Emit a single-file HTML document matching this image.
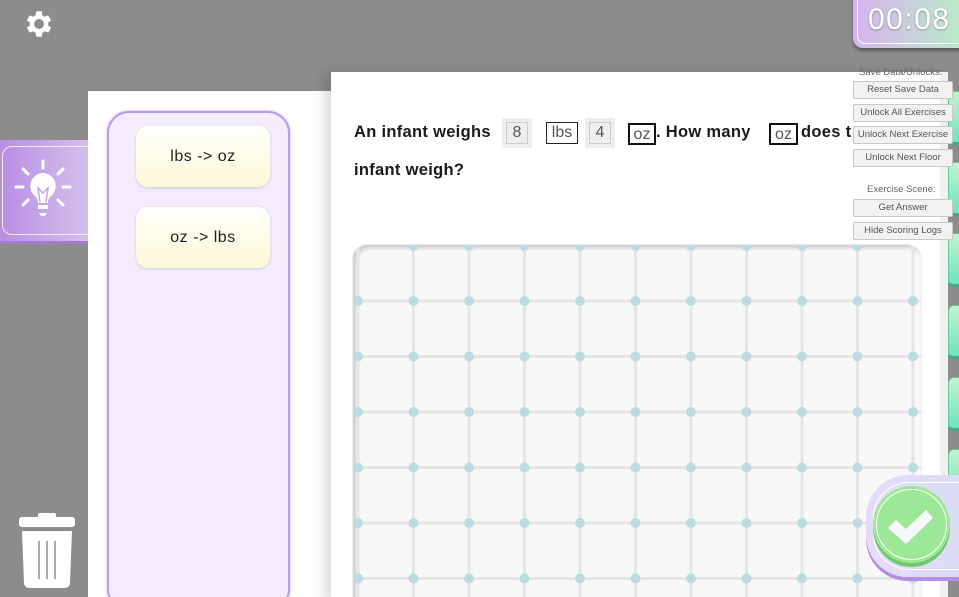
<!DOCTYPE html>
<html style="width:959px;height:597px;overflow:hidden"><head><meta charset="utf-8"><style>
*{margin:0;padding:0;box-sizing:border-box}
body{width:959px;height:597px;overflow:hidden;background:#8c8c8c;font-family:"Liberation Sans",sans-serif;position:relative}
.abs{position:absolute}
.left{left:88px;top:91px;width:245px;height:520px;background:#fff}
.lp{left:107px;top:111px;width:183px;height:500px;background:#f3ecfd;border:2px solid #b79be6;border-radius:22px;box-shadow:0 0 3px #c8b3ee}
.card{left:136px;width:134px;height:61px;border-radius:12px;background:linear-gradient(#fffffb,#fdf8d8);box-shadow:0 1px 3px rgba(0,0,0,.15);font-size:16px;color:#222;text-align:center;line-height:61px;letter-spacing:.5px}
.main{left:331px;top:72px;width:610px;height:530px;background:#fff;box-shadow:-8px 0 10px rgba(0,0,0,.12)}
.q{left:354px;font-size:16.5px;font-weight:bold;color:#1a1a1a;letter-spacing:.3px}
.bx{position:absolute;height:22px;font-size:16px;font-weight:normal;color:#555;text-align:center;line-height:20px}
.g{background:#eee;border:1px solid #ccc;outline:4px solid #eee}
.k{border:2px solid #111}
.btn{left:853px;width:100px;height:18px;background:#f2f2f2;border:1px solid #c8c8c8;border-radius:2px;font-size:9.5px;color:#555;text-align:center;line-height:16px}
.lbl{font-size:9.5px;color:#666}
.tab{left:948px;width:14px;height:54px;border-radius:6px 0 0 6px;background:linear-gradient(#c5f3d1,#70e3bd);border:1px solid #5ccca0;border-bottom:3px solid #3fae86}
</style></head><body>
<svg class="abs" style="left:22px;top:7px" width="34" height="34" viewBox="0 0 24 24"><path fill="#fff" d="M19.4 13a7.5 7.5 0 0 0 0-2l2.1-1.6-2-3.5-2.5 1a7 7 0 0 0-1.7-1L15 3h-4l-.4 2.9a7 7 0 0 0-1.7 1l-2.5-1-2 3.5L6.6 11a7.5 7.5 0 0 0 0 2l-2.2 1.6 2 3.5 2.5-1a7 7 0 0 0 1.7 1L11 21h4l.4-2.9a7 7 0 0 0 1.7-1l2.5 1 2-3.5zM13 15.5A3.5 3.5 0 1 1 13 8.5a3.5 3.5 0 0 1 0 7z" transform="translate(-1 0)"/></svg>
<div class="abs" style="left:-10px;top:140px;width:110px;height:101px;border-radius:12px;background:linear-gradient(90deg,#b389e4,#d8c6ec);box-shadow:0 3px 0 #a57ad6"><div style="position:absolute;left:12px;top:6px;right:-4px;bottom:6px;border:1px solid #eee;border-radius:10px"></div></div>
<svg class="abs" style="left:13px;top:158px" width="60" height="60" viewBox="0 0 60 60"><g stroke="#fff" stroke-width="3" stroke-linecap="round"><line x1="30" y1="3" x2="30" y2="10"/><line x1="10" y1="11" x2="15" y2="16"/><line x1="50" y1="11" x2="45" y2="16"/><line x1="3" y1="29" x2="10" y2="29"/><line x1="50" y1="29" x2="57" y2="29"/><line x1="10" y1="47" x2="15" y2="42"/><line x1="50" y1="47" x2="45" y2="42"/></g><path fill="#fff" d="M30 15a13 13 0 0 0-8 23c2 2 3 4 3 7h10c0-3 1-5 3-7a13 13 0 0 0-8-23z"/><rect x="25" y="47" width="10" height="4" fill="#fff"/><path d="M26 55h8l-2 3h-4z" fill="#fff"/><path d="M27 44l-2-14 5 5 5-5-2 14" stroke="#c4a6e6" stroke-width="1.5" fill="none"/></svg>
<svg class="abs" style="left:18px;top:513px" width="58" height="76" viewBox="0 0 58 76"><rect x="1" y="4" width="56" height="10" rx="3" fill="#fff"/><rect x="20" y="0" width="18" height="6" rx="2" fill="#fff"/><path d="M4 18h50l-2 52a5 5 0 0 1-5 5H11a5 5 0 0 1-5-5z" fill="#fff"/><g stroke="#aaa" stroke-width="2"><line x1="21" y1="28" x2="21" y2="66"/><line x1="29" y1="28" x2="29" y2="66"/><line x1="37" y1="28" x2="37" y2="66"/></g></svg>
<div class="abs left"></div>
<div class="abs lp"></div>
<div class="abs card" style="top:126px">lbs -&gt; oz</div>
<div class="abs card" style="top:207px">oz -&gt; lbs</div>
<div class="abs main"></div>
<div class="abs q" style="top:123px">An infant weighs</div>
<div class="bx g" style="left:506px;top:122px;width:22px">8</div>
<div class="bx" style="left:546px;top:122px;width:32px;border:1px solid #222">lbs</div>
<div class="bx g" style="left:589px;top:122px;width:22px">4</div>
<div class="bx k" style="left:628px;top:123px;width:28px">oz</div>
<div class="abs q" style="left:656px;top:123px">. How many</div>
<div class="bx k" style="left:769px;top:123px;width:29px">oz</div>
<div class="abs q" style="left:801px;top:123px">does t</div>
<div class="abs q" style="top:161px">infant weigh?</div>
<div class="abs" style="left:353px;top:245px;width:568px;height:370px;border-radius:14px;background:#f8f8f8;box-shadow:inset 3px 3px 4px rgba(0,0,0,.18),0 0 2px #ccc;overflow:hidden">
<svg width="568" height="370" style="position:absolute;left:0;top:0">
<g stroke="#e6e6e6" stroke-width="3">
<line x1="5" y1="0" x2="5" y2="370"/><line x1="60.5" y1="0" x2="60.5" y2="370"/><line x1="116" y1="0" x2="116" y2="370"/><line x1="171.5" y1="0" x2="171.5" y2="370"/><line x1="227" y1="0" x2="227" y2="370"/><line x1="282.5" y1="0" x2="282.5" y2="370"/><line x1="338" y1="0" x2="338" y2="370"/><line x1="393.5" y1="0" x2="393.5" y2="370"/><line x1="449" y1="0" x2="449" y2="370"/><line x1="504.5" y1="0" x2="504.5" y2="370"/><line x1="560" y1="0" x2="560" y2="370"/>
<line x1="0" y1="56" x2="568" y2="56"/><line x1="0" y1="111.5" x2="568" y2="111.5"/><line x1="0" y1="167" x2="568" y2="167"/><line x1="0" y1="222.5" x2="568" y2="222.5"/><line x1="0" y1="278" x2="568" y2="278"/><line x1="0" y1="333.5" x2="568" y2="333.5"/>
</g></svg></div>
<svg class="abs" style="left:353px;top:245px" width="568" height="352">
<g fill="#bcdbe1">
<circle cx="5" cy="56" r="5"/><circle cx="60.5" cy="56" r="5"/><circle cx="116" cy="56" r="5"/><circle cx="171.5" cy="56" r="5"/><circle cx="227" cy="56" r="5"/><circle cx="282.5" cy="56" r="5"/><circle cx="338" cy="56" r="5"/><circle cx="393.5" cy="56" r="5"/><circle cx="449" cy="56" r="5"/><circle cx="504.5" cy="56" r="5"/><circle cx="560" cy="56" r="5"/>
<circle cx="5" cy="111.5" r="5"/><circle cx="60.5" cy="111.5" r="5"/><circle cx="116" cy="111.5" r="5"/><circle cx="171.5" cy="111.5" r="5"/><circle cx="227" cy="111.5" r="5"/><circle cx="282.5" cy="111.5" r="5"/><circle cx="338" cy="111.5" r="5"/><circle cx="393.5" cy="111.5" r="5"/><circle cx="449" cy="111.5" r="5"/><circle cx="504.5" cy="111.5" r="5"/><circle cx="560" cy="111.5" r="5"/>
<circle cx="5" cy="167" r="5"/><circle cx="60.5" cy="167" r="5"/><circle cx="116" cy="167" r="5"/><circle cx="171.5" cy="167" r="5"/><circle cx="227" cy="167" r="5"/><circle cx="282.5" cy="167" r="5"/><circle cx="338" cy="167" r="5"/><circle cx="393.5" cy="167" r="5"/><circle cx="449" cy="167" r="5"/><circle cx="504.5" cy="167" r="5"/><circle cx="560" cy="167" r="5"/>
<circle cx="5" cy="222.5" r="5"/><circle cx="60.5" cy="222.5" r="5"/><circle cx="116" cy="222.5" r="5"/><circle cx="171.5" cy="222.5" r="5"/><circle cx="227" cy="222.5" r="5"/><circle cx="282.5" cy="222.5" r="5"/><circle cx="338" cy="222.5" r="5"/><circle cx="393.5" cy="222.5" r="5"/><circle cx="449" cy="222.5" r="5"/><circle cx="504.5" cy="222.5" r="5"/><circle cx="560" cy="222.5" r="5"/>
<circle cx="5" cy="278" r="5"/><circle cx="60.5" cy="278" r="5"/><circle cx="116" cy="278" r="5"/><circle cx="171.5" cy="278" r="5"/><circle cx="227" cy="278" r="5"/><circle cx="282.5" cy="278" r="5"/><circle cx="338" cy="278" r="5"/><circle cx="393.5" cy="278" r="5"/><circle cx="449" cy="278" r="5"/><circle cx="504.5" cy="278" r="5"/><circle cx="560" cy="278" r="5"/>
<circle cx="5" cy="333.5" r="5"/><circle cx="60.5" cy="333.5" r="5"/><circle cx="116" cy="333.5" r="5"/><circle cx="171.5" cy="333.5" r="5"/><circle cx="227" cy="333.5" r="5"/><circle cx="282.5" cy="333.5" r="5"/><circle cx="338" cy="333.5" r="5"/><circle cx="393.5" cy="333.5" r="5"/><circle cx="449" cy="333.5" r="5"/><circle cx="504.5" cy="333.5" r="5"/><circle cx="560" cy="333.5" r="5"/>
<circle cx="60.5" cy="1" r="5"/><circle cx="116" cy="1" r="5"/><circle cx="171.5" cy="1" r="5"/><circle cx="227" cy="1" r="5"/><circle cx="282.5" cy="1" r="5"/><circle cx="338" cy="1" r="5"/><circle cx="393.5" cy="1" r="5"/><circle cx="449" cy="1" r="5"/><circle cx="504.5" cy="1" r="5"/>
</g></svg>
<div class="abs" style="left:940px;top:72px;width:8px;height:525px;background:#f1f1f1"></div>
<div class="abs tab" style="top:91px"></div>
<div class="abs tab" style="top:162px"></div>
<div class="abs tab" style="top:233px"></div>
<div class="abs tab" style="top:305px"></div>
<div class="abs tab" style="top:377px"></div>
<div class="abs tab" style="top:449px"></div>
<div class="abs" style="left:853px;top:-10px;width:120px;height:58px;border-radius:10px;background:linear-gradient(90deg,#d6b3f0,#b8f0c4);box-shadow:0 3px 3px rgba(0,0,0,.35)"><div style="position:absolute;left:4px;top:4px;right:4px;bottom:4px;border:1px solid #fff;border-radius:8px"></div></div>
<div class="abs" style="left:868px;top:3px;font-size:30px;color:#fff;letter-spacing:1.5px;text-shadow:0 1px 2px rgba(0,0,0,.3)">00:08</div>
<div class="abs lbl" style="left:859px;top:67px">Save Data/Unlocks:</div>
<div class="abs btn" style="top:81px">Reset Save Data</div>
<div class="abs btn" style="top:104px">Unlock All Exercises</div>
<div class="abs btn" style="top:126px">Unlock Next Exercise</div>
<div class="abs btn" style="top:149px">Unlock Next Floor</div>
<div class="abs lbl" style="left:867px;top:184px">Exercise Scene:</div>
<div class="abs btn" style="top:199px">Get Answer</div>
<div class="abs btn" style="top:222px">Hide Scoring Logs</div>
<div class="abs" style="left:866px;top:475px;width:110px;height:102px;border-radius:42px 0 0 42px;background:linear-gradient(90deg,#e6dcf9,#d8ddf4);box-shadow:0 4px 0 #b48ee0"><div style="position:absolute;left:7px;top:7px;right:0;bottom:7px;border:1px solid #fff;border-right:none;border-radius:36px 0 0 36px"></div></div>
<div class="abs" style="left:873px;top:486px;width:77px;height:77px;border-radius:50%;background:#9de896;box-shadow:0 4px 0 #6fc86e"><div style="position:absolute;left:3px;top:3px;right:3px;bottom:3px;border:1.5px solid #fff;border-radius:50%"></div></div>
<svg class="abs" style="left:873px;top:486px" width="77" height="77" viewBox="0 0 77 77"><path d="M15 42l8-8 10 9 20-19 7 8-27 26z" fill="#f7f8fb"/></svg>
</body></html>
